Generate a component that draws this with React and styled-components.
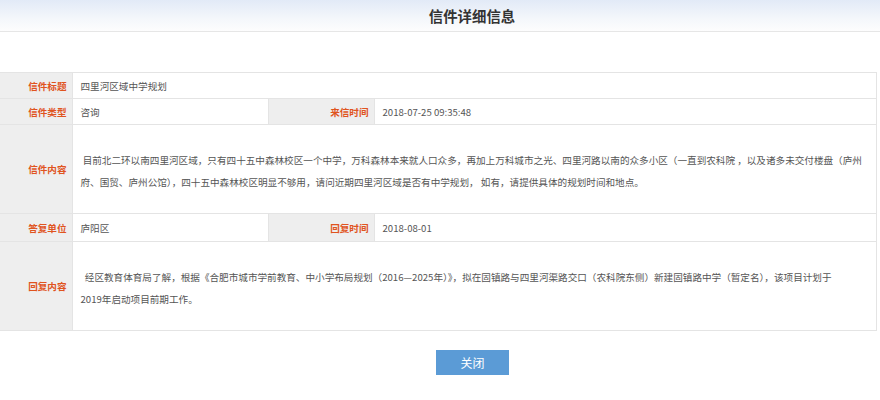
import React from 'react'
import styled, { createGlobalStyle } from 'styled-components';

const Global = createGlobalStyle`
    body {
        margin: 0;
        background: #fff;
        font-family: "Microsoft YaHei", "Noto Sans CJK SC", "Liberation Sans", sans-serif;
    }
`;

const Header = styled.div`
    height: 31px;
    background: linear-gradient(to bottom, #e2eaf7 0%, #f4f7fb 60%, #fdfdfd 100%);
    border-bottom: 1px solid #e6e6e6;
    display: flex;
    align-items: center;
    justify-content: center;
    padding-left: 64px;
`;

const Title = styled.h2`
    margin: 0;
    font-size: 14.4px;
    font-weight: bold;
    color: #333;
`;

const Body = styled.div`
    padding: 40px 3px 0 0;
`;

const Table = styled.table`
    width: 100%;
    border-collapse: collapse;
    table-layout: fixed;
    border: 1px solid #e4e4e4;
    border-left: none;
    font-size: 9.6px;
`;

const Row = styled.tr`
    height: ${(p) => p.$h}px;
`;

const Label = styled.td`
    background: #eeeeee;
    color: #e0541e;
    font-weight: bold;
    text-align: right;
    padding: 0 5px 0 0;
    border: 1px solid #e4e4e4;
    border-left: none;
    white-space: nowrap;
`;

const Value = styled.td`
    color: #555;
    padding: 0 8px;
    border: 1px solid #e4e4e4;
`;

const Paragraph = styled.td`
    color: #555;
    padding: 3px 10px 0 8px;
    line-height: 22px;
    border: 1px solid #e4e4e4;
`;

const Keep = styled.span`
    white-space: nowrap;
`;

const Footer = styled.div`
    display: flex;
    justify-content: center;
    padding: 19px 0 0 65px;
`;

const CloseButton = styled.button`
    width: 73px;
    height: 25px;
    background: #5b9bd6;
    border: none;
    color: #fff;
    font-family: inherit;
    font-size: 12px;
    cursor: pointer;
`;

function App() {
    return (
        <>
            <Global />
            <Header><Title>信件详细信息</Title></Header>
            <Body>
                <Table>
                    <colgroup>
                        <col style={{ width: 72 }} />
                        <col style={{ width: 196 }} />
                        <col style={{ width: 106 }} />
                        <col />
                    </colgroup>
                    <tbody>
                        <Row $h={26}>
                            <Label>信件标题</Label>
                            <Value colSpan={3}>四里河区域中学规划</Value>
                        </Row>
                        <Row $h={26}>
                            <Label>信件类型</Label>
                            <Value>咨询</Value>
                            <Label>来信时间</Label>
                            <Value>2018-07-25 09:35:48</Value>
                        </Row>
                        <Row $h={89}>
                            <Label>信件内容</Label>
                            <Paragraph colSpan={3}>
                                &nbsp;目前北二环以南四里河区域，只有四十五中森林校区一个中学，万科森林本来就人口众多，再加上万科城市之光、四里河路以南的众多小区（一直到农科院 ，以及诸多未交付楼盘（庐州府、国贸、庐州公馆），四十五中森林校区明显不够用，请问近期四里河区域是否有中学规划， 如有，请提供具体的规划时间和地点。
                            </Paragraph>
                        </Row>
                        <Row $h={28}>
                            <Label>答复单位</Label>
                            <Value>庐阳区</Value>
                            <Label>回复时间</Label>
                            <Value>2018-08-01</Value>
                        </Row>
                        <Row $h={89}>
                            <Label>回复内容</Label>
                            <Paragraph colSpan={3}>
                                &nbsp;&nbsp;经区教育体育局了解，根据《合肥市城市学前教育、中小学布局规划（2016—2025年）》，拟在固镇路与四里河渠路交口（农科院东侧）新建固镇路中学（暂定名），该项目计划于<Keep>2019年启动项目前期工作。</Keep>
                            </Paragraph>
                        </Row>
                    </tbody>
                </Table>
            </Body>
            <Footer><CloseButton>关闭</CloseButton></Footer>
        </>
    )
}

export default App;
